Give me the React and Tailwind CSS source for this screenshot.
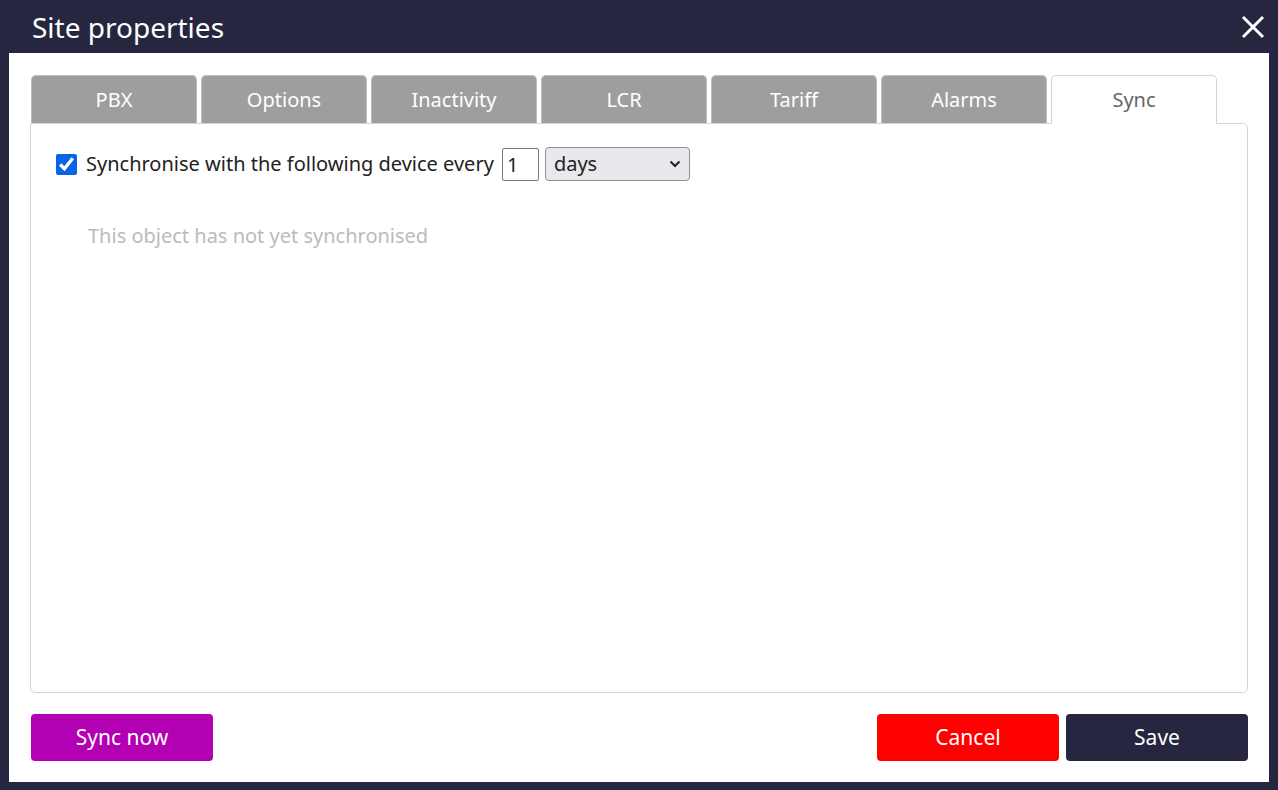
import React from "react";

const tabs = ["PBX", "Options", "Inactivity", "LCR", "Tariff", "Alarms", "Sync"];

export default function App() {
  return (
    <div className="w-[1278px] h-[790px] bg-[#262640] flex flex-col font-['Inter',sans-serif]">
      {/* Title bar */}
      <div className="h-[53px] flex items-center justify-between pl-[32px] pr-[12px]">
        <span className="text-white text-[28px]">Site properties</span>
        <svg width="26" height="26" viewBox="0 0 26 26" className="text-white">
          <path d="M3 3L23 23M23 3L3 23" stroke="currentColor" strokeWidth="3" />
        </svg>
      </div>

      {/* Body */}
      <div className="mx-[9px] mb-[8px] flex-1 bg-white flex flex-col px-[21px] pt-[22px] pb-[21px]">
        <div className="flex gap-[4px] pl-px">
          {tabs.map((t) => (
            <div
              key={t}
              className={
                t === "Sync"
                  ? "w-[166px] h-[49px] -mb-px z-10 bg-white border border-b-0 border-[#d4d4d4] rounded-t-[5px] flex items-center justify-center text-[20px] text-[#666]"
                  : "w-[166px] h-[48px] bg-[#9e9e9e] border border-b-0 border-[#bdbdbd] rounded-t-[5px] flex items-center justify-center text-[20px] text-white"
              }
            >
              {t}
            </div>
          ))}
        </div>
        <div className="flex-1 border border-[#d4d4d4] rounded-b-[5px] rounded-tr-[5px] px-[25px] pt-[23px]">
          <div className="flex items-center text-[20px] text-[#222]">
            <input type="checkbox" defaultChecked className="w-[21px] h-[21px] accent-[#0b63e5] mr-[9px]" />
            <span>Synchronise with the following device every</span>
            <input
              defaultValue="1"
              className="ml-[8px] w-[37px] h-[33px] border border-[#767676] rounded-[2px] px-[4px] text-[20px] font-['Liberation_Sans',sans-serif]"
            />
            <div className="ml-[6px] w-[145px] h-[34px] bg-[#e9e9ed] border border-[#8f8f9d] rounded-[4px] flex items-center justify-between px-[8px] font-['Liberation_Sans',sans-serif] text-[20px]">
              <span>days</span>
              <svg width="12" height="8" viewBox="0 0 12 8">
                <path d="M1.5 1.5L6 6L10.5 1.5" stroke="#222" strokeWidth="2" fill="none" />
              </svg>
            </div>
          </div>
          <div className="mt-[40px] ml-[32px] text-[20px] text-[#bbb]">This object has not yet synchronised</div>
        </div>
        <div className="flex items-center justify-between mt-[21px] pl-px">
          <button className="w-[182px] h-[47px] bg-[#b300b3] text-white rounded-[4px] text-[21px] font-['Liberation_Sans',sans-serif]">Sync now</button>
          <div className="flex gap-[7px]">
            <button className="w-[182px] h-[47px] bg-[#ff0000] text-white rounded-[4px] text-[21px] font-['Liberation_Sans',sans-serif]">Cancel</button>
            <button className="w-[182px] h-[47px] bg-[#262640] text-white rounded-[4px] text-[21px] font-['Liberation_Sans',sans-serif]">Save</button>
          </div>
        </div>
      </div>
    </div>
  );
}
